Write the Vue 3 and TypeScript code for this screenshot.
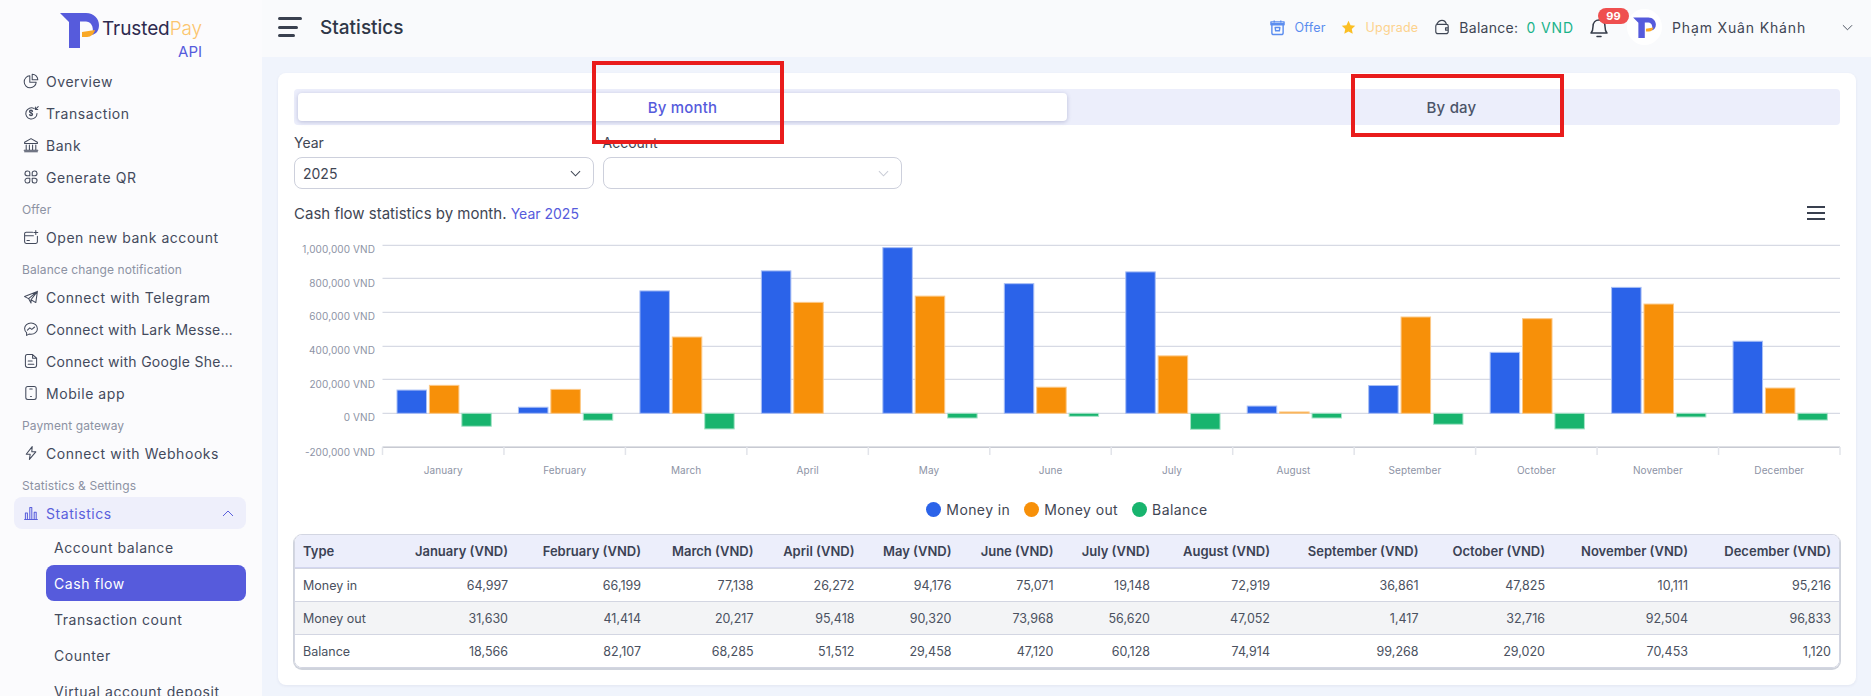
<script setup lang="ts">
interface NavRow { kind: 'item' | 'label' | 'open' | 'sub' | 'subactive'; text: string; icon?: string }

const nav: NavRow[] = [
  { kind: 'item', text: 'Overview', icon: 'M8.500 3.500a7.500 7.500 0 1 0 8 8h-8zM11.500 1.500a7 7 0 0 1 7 7h-7z' },
  { kind: 'item', text: 'Transaction', icon: 'M14 4.500a7 7 0 1 0 3.500 6M10 6.500v7M12 8a2 1.600 0 0 0-4 0c0 2.400 4 1.200 4 3.800a2 1.600 0 0 1-4 0M19 2l-3.500 3.500M15.500 2.500v3h3' },
  { kind: 'item', text: 'Bank', icon: 'M10 2l8 4.500v1.500H2V6.500zM4 10v6M8 10v6M12 10v6M16 10v6M2 18.500h16M1.500 16.500h17' },
  { kind: 'item', text: 'Generate QR', icon: 'M6 2.500a2.500 2.500 0 0 1 2.500 2.500v3.500H5a2.500 2.500 0 0 1 1-6zM14 2.500a2.500 2.500 0 0 0-2.500 2.500v3.500H15a2.500 2.500 0 0 0-1-6zM6 17.500a2.500 2.500 0 0 0 2.500-2.500v-3.500H5a2.500 2.500 0 0 0 1 6zM14 17.500a2.500 2.500 0 0 1-2.500-2.500v-3.500H15a2.500 2.500 0 0 1-1 6z' },
  { kind: 'label', text: 'Offer' },
  { kind: 'item', text: 'Open new bank account', icon: 'M12 4H4a2 2 0 0 0-2 2v10a2 2 0 0 0 2 2h12a2 2 0 0 0 2-2V9M2 8.500h11M5 14.500h3M16 2v5M13.500 4.500h5' },
  { kind: 'label', text: 'Balance change notification' },
  { kind: 'item', text: 'Connect with Telegram', icon: 'M18 3L2 9.500l5 2.500 11-9-8 10.500 0 4-3-5.500M18 3l-2 14-6-3.500' },
  { kind: 'item', text: 'Connect with Lark Messe…', icon: 'M10 2.500c-4.400 0-8 3.100-8 7 0 2 .9 3.800 2.500 5.100V18l3-1.600c.8.200 1.600.200 2.500.200 4.400 0 8-3.100 8-7s-3.600-7.100-8-7.100zM5.500 11.500l3-3 2.500 2 3.500-3' },
  { kind: 'item', text: 'Connect with Google She…', icon: 'M5 2h7l5 4.500V15a3 3 0 0 1-3 3H6a3 3 0 0 1-3-3V4.500A2.500 2.500 0 0 1 5 2zM12 2.500v4h4.500M6.500 10h5M6.500 14h7' },
  { kind: 'item', text: 'Mobile app', icon: 'M6 2h8a2.500 2.500 0 0 1 2.500 2.500v11A2.500 2.500 0 0 1 14 18H6a2.500 2.500 0 0 1-2.500-2.500v-11A2.500 2.500 0 0 1 6 2zM8.500 5h3M9.500 14.500h1' },
  { kind: 'label', text: 'Payment gateway' },
  { kind: 'item', text: 'Connect with Webhooks', icon: 'M11.500 2L4 11.500h5l-1 6.500L16 8.500h-5z' },
  { kind: 'label', text: 'Statistics & Settings' },
  { kind: 'open', text: 'Statistics', icon: 'M2 18h16M3 18v-8h2.500v8M8.500 18V3h2.500v15M14 18v-9h2.500v9' },
  { kind: 'sub', text: 'Account balance' },
  { kind: 'subactive', text: 'Cash flow' },
  { kind: 'sub', text: 'Transaction count' },
  { kind: 'sub', text: 'Counter' },
  { kind: 'sub', text: 'Virtual account deposit' }
]

const months = ['January', 'February', 'March', 'April', 'May', 'June', 'July', 'August', 'September', 'October', 'November', 'December']

// Values in thousands of VND
const moneyIn = [138, 36, 727, 846, 984, 770, 840, 43, 165, 362, 748, 428]
const moneyOut = [166, 142, 453, 659, 696, 155, 341, 8, 572, 562, 649, 150]
const balance = [-77, -41, -93, 0, -28, -18, -95, -28, -65, -93, -22, -40]

const plot = { left: 382.5, right: 1840, zero: 413.3, perStep: 33.67, barW: 29.5, barStep: 32.4, inset: 14.5 }
const ticks = [
  { label: '1,000,000 VND', y: 245.3, ly: 253.3 },
  { label: '800,000 VND', y: 278.3, ly: 287.3 },
  { label: '600,000 VND', y: 312.3, ly: 320.3 },
  { label: '400,000 VND', y: 346.3, ly: 354.3 },
  { label: '200,000 VND', y: 379.3, ly: 388.3 },
  { label: '0 VND', y: 413.3, ly: 421.3 },
  { label: '-200,000 VND', y: 447.3, ly: 455.7 }
]
const monthW = (plot.right - plot.left) / 12
const chartTop = 195
const yOf = (thousands: number) => plot.zero - (thousands / 200) * plot.perStep - chartTop
const xOf = (month: number, series: number) => plot.left + monthW * month + plot.inset + plot.barStep * series

const series = [
  { color: '#2b63e9', stroke: '#a9bff5', values: moneyIn },
  { color: '#f79009', stroke: '#fcc988', values: moneyOut },
  { color: '#18b46e', stroke: '#a7e3c8', values: balance }
]

const bars = series.flatMap((s, si) =>
  s.values
    .map((v, mi) => ({
      key: `${si}-${mi}`,
      x: xOf(mi, si),
      y: Math.min(yOf(v), yOf(0)),
      h: Math.abs(yOf(v) - yOf(0)),
      color: s.color,
      stroke: s.stroke
    }))
    .filter((b) => b.h > 0)
)

const legend = [
  { text: 'Money in', color: '#2b63e9' },
  { text: 'Money out', color: '#f79009' },
  { text: 'Balance', color: '#18b46e' }
]

const head = ['Type', ...months.map((m) => `${m} (VND)`)]
const rows = [
  ['Money in', '64,997', '66,199', '77,138', '26,272', '94,176', '75,071', '19,148', '72,919', '36,861', '47,825', '10,111', '95,216'],
  ['Money out', '31,630', '41,414', '20,217', '95,418', '90,320', '73,968', '56,620', '47,052', '1,417', '32,716', '92,504', '96,833'],
  ['Balance', '18,566', '82,107', '68,285', '51,512', '29,458', '47,120', '60,128', '74,914', '99,268', '29,020', '70,453', '1,120']
]
</script>

<template>
  <div class="shell">
    <aside class="side">
      <div class="brand">
        <svg class="mark" viewBox="0 0 39 36" width="39" height="36">
          <path d="M0 1H26C34 1 39 7 39 13C39 19 36 22 32 23C34 18 33 10 26 9.500H20V36H9V10Z" fill="#565bdc" />
          <path d="M22 20L35 18C34 22 31 25 27 25H22Z" fill="#f9a826" />
        </svg>
        <div class="brand-text">
          <div class="brand-name">Trusted<span>Pay</span></div>
          <div class="brand-api">API</div>
        </div>
      </div>
      <nav class="nav">
        <div v-for="row in nav" :key="row.text" :class="['row', row.kind, { cut: row.text.endsWith('…') }]">
          <svg v-if="row.icon" class="nav-icon" viewBox="0 0 20 20" width="16" height="16">
            <path :d="row.icon" fill="none" stroke="currentColor" stroke-width="1.300" stroke-linecap="round" stroke-linejoin="round" />
          </svg>
          <span>{{ row.text }}</span>
          <svg v-if="row.kind === 'open'" class="nav-chev" viewBox="0 0 12 7" width="12" height="7">
            <path d="M1 6l5-5 5 5" fill="none" stroke="currentColor" stroke-width="1" />
          </svg>
        </div>
      </nav>
    </aside>

    <div class="right">
      <header class="top">
        <div class="burger"><i></i><i></i><i></i></div>
        <h1>Statistics</h1>
        <div class="tools">
          <div class="tool offer">
            <svg viewBox="0 0 16 18" width="15" height="17">
              <path d="M2 5h12v9.500a2 2 0 0 1-2 2H4a2 2 0 0 1-2-2zM1 3h14v3H1zM4.500 1.500V4M11.500 1.500V4M5.500 9h5l-.5 3.500h-4z" fill="none" stroke="currentColor" stroke-width="1.500" stroke-linejoin="round" />
            </svg>
            <span>Offer</span>
          </div>
          <div class="tool upgrade">
            <svg viewBox="0 0 16 16" width="15" height="15">
              <path d="M8 .8l2.200 4.700 5 .6-3.700 3.500 1 5.100L8 12.200l-4.500 2.500 1-5.100L.8 6.100l5-.6z" fill="#fbbf24" />
            </svg>
            <span>Upgrade</span>
          </div>
          <div class="tool bal">
            <svg viewBox="0 0 18 18" width="16" height="16">
              <path d="M3 6c1-2 3-4.500 6-4.500S13.500 4 14 6M2 8a2 2 0 0 1 2-2h10a2 2 0 0 1 2 2v6a2.500 2.500 0 0 1-2.500 2.500h-9A2.500 2.500 0 0 1 2 14zM16 10h-3v2.500h3" fill="none" stroke="#3f4654" stroke-width="1.300" stroke-linejoin="round" />
            </svg>
            <span>Balance:</span>
            <b>0 VND</b>
          </div>
          <div class="bell">
            <svg viewBox="0 0 20 22" width="20" height="22">
              <path d="M2 17c1.500-1.500 2-3 2-6.500C4 6.500 6.500 4 10 4s6 2.500 6 6.500c0 3.500.5 5 2 6.500zM8 20.500h4" fill="none" stroke="#343b48" stroke-width="1.500" stroke-linecap="round" stroke-linejoin="round" />
            </svg>
            <em>99</em>
          </div>
          <div class="avatar">
            <svg viewBox="0 0 39 36" width="23" height="21">
              <path d="M0 1H26C34 1 39 7 39 13C39 19 36 22 32 23C34 18 33 10 26 9.500H20V36H9V10Z" fill="#565bdc" />
              <path d="M22 20L35 18C34 22 31 25 27 25H22Z" fill="#f9a826" />
            </svg>
          </div>
          <div class="name">Phạm Xuân Khánh</div>
          <svg class="name-chev" viewBox="0 0 12 7" width="11" height="7">
            <path d="M1 1l5 5 5-5" fill="none" stroke="#3f4654" stroke-width="1" />
          </svg>
        </div>
      </header>

      <main class="main">
        <section class="card">
          <div class="tabs">
            <div class="tab active">By month</div>
            <div class="tab">By day</div>
          </div>

          <div class="filters">
            <div class="field">
              <label>Year</label>
              <div class="select">
                <span>2025</span>
                <svg viewBox="0 0 12 7" width="11" height="7"><path d="M1 1l5 5 5-5" fill="none" stroke="#3f4654" stroke-width="1.100" /></svg>
              </div>
            </div>
            <div class="field">
              <label>Account</label>
              <div class="select">
                <span></span>
                <svg viewBox="0 0 12 7" width="11" height="7"><path d="M1 1l5 5 5-5" fill="none" stroke="#c9ccd6" stroke-width="1.100" /></svg>
              </div>
            </div>
          </div>

          <div class="title-row">
            <div class="title">Cash flow statistics by month. <span>Year 2025</span></div>
            <div class="menu"><i></i><i></i><i></i></div>
          </div>

          <svg class="chart" width="1546" height="290" viewBox="294 0 1546 290">
            <g v-for="t in ticks" :key="t.label">
              <line :x1="plot.left" :x2="plot.right" :y1="t.y - chartTop" :y2="t.y - chartTop" class="grid" />
              <text x="375" :y="t.ly - chartTop" text-anchor="end" class="tick">{{ t.label }}</text>
            </g>
            <line :x1="plot.left" :x2="plot.right" y1="252.300" y2="252.300" class="axis" />
            <line v-for="i in 13" :key="i" :x1="plot.left + monthW * (i - 1)" :x2="plot.left + monthW * (i - 1)" y1="252" y2="260" class="mtick" />
            <text v-for="(m, i) in months" :key="m" :x="plot.left + monthW * (i + 0.5)" y="279" text-anchor="middle" class="tick">{{ m }}</text>
            <rect v-for="b in bars" :key="b.key" :x="b.x" :y="b.y" :width="plot.barW" :height="b.h" :fill="b.color" :stroke="b.stroke" stroke-width="1" />
          </svg>

          <div class="legend">
            <div v-for="l in legend" :key="l.text" class="leg">
              <i :style="{ background: l.color }"></i>{{ l.text }}
            </div>
          </div>

          <div class="table">
            <div class="tr thead">
              <div v-for="h in head" :key="h" class="td">{{ h }}</div>
            </div>
            <div v-for="r in rows" :key="r[0]" class="tr">
              <div v-for="(c, i) in r" :key="i" class="td">{{ c }}</div>
            </div>
          </div>
        </section>
      </main>

      <div class="mark-box one"></div>
      <div class="mark-box two"></div>
    </div>
  </div>
</template>

<style>
html, body { margin: 0; height: 100%; overflow: hidden; background: #f0f4fc; }
</style>

<style scoped>
* { box-sizing: border-box; }
.shell {
  display: flex;
  width: 1871px;
  height: 696px;
  overflow: hidden;
  font-family: Inter, "Noto Sans", sans-serif;
  color: #3f4654;
}
.side { width: 262px; flex: none; background: #fbfbfd; height: 696px; overflow: hidden; }
.brand { height: 65px; display: flex; padding: 12px 0 0 60px; gap: 3px; }
.mark { flex: none; }
.brand-text { width: 100px; padding-top: 7px; }
.brand-name { font-size: 19px; line-height: 20px; color: #2e2a4f; letter-spacing: -.1px; white-space: nowrap; }
.brand-name span { color: #fbc56d; font-weight: 300; }
.brand-api { text-align: right; font-size: 15px; line-height: 20px; color: #565bdc; margin-top: 3px; }
.nav { padding: 0 16px 0 14px; }
.row { display: flex; align-items: center; white-space: nowrap; font-size: 14px; letter-spacing: .55px; color: #434a5c; }
.row.cut { letter-spacing: .28px; }
.item { height: 32px; padding-left: 9px; gap: 7px; }
.label { height: 28px; padding: 4px 0 0 8px; font-size: 12px; letter-spacing: .1px; color: #8c92a3; }
.nav-icon { flex: none; width: 16px; height: 16px; }
.open { height: 32px; padding: 0 12px 0 9px; gap: 7px; background: #eeeffb; border-radius: 8px; color: #5a5fdc; }
.nav-chev { margin-left: auto; }
.sub { height: 36px; margin-left: 32px; padding-left: 8px; }
.subactive { height: 36px; margin-left: 32px; padding-left: 8px; background: #565bdc; border-radius: 8px; color: #fff; }

.right { flex: 1; min-width: 0; position: relative; display: flex; flex-direction: column; }
.top { height: 57px; flex: none; background: #f9fafc; display: flex; align-items: center; padding: 0 0 3px 16px; }
.burger { width: 24px; height: 20px; display: flex; flex-direction: column; justify-content: space-between; }
.burger i { display: block; height: 3px; background: #39404f; border-radius: 2px; }
.burger i:first-child { width: 24px; }
.burger i:nth-child(2) { width: 20px; }
.burger i:nth-child(3) { width: 17px; }
h1 { margin: 0 0 0 18px; font-size: 19px; font-weight: 500; color: #2f3747; letter-spacing: 0; }
.tools { margin-left: auto; display: flex; align-items: center; padding-right: 18px; }
.tool { display: flex; align-items: center; font-size: 12.500px; letter-spacing: .2px; white-space: nowrap; }
.offer { color: #5b8def; gap: 10px; }
.upgrade { color: #fdd28d; gap: 10px; margin-left: 15px; }
.bal { font-size: 14px; letter-spacing: .3px; gap: 9px; margin-left: 16px; color: #3f4654; }
.bal b { font-weight: 400; color: #1ab38a; margin-left: -1px; letter-spacing: .9px; }
.bell { position: relative; width: 20px; height: 22px; margin-left: 15px; }
.bell em {
  position: absolute; left: 9px; top: -8px; width: 31px; height: 16px; border-radius: 8px;
  background: #ef4f4f; color: #fff; font-size: 11px; line-height: 16px; font-weight: 700; font-style: normal; text-align: center;
}
.avatar { width: 35px; height: 36px; border-radius: 50%; background: #fff; display: flex; align-items: center; justify-content: center; margin-left: 18px; position: relative; }
.name { font-size: 14px; margin-left: 10px; width: 170px; color: #3f4654; letter-spacing: .85px; white-space: nowrap; }
.name-chev { flex: none; }

.main { flex: 1; min-height: 0; background: #f0f4fc; padding: 16px 15px 0 16px; }
.card { background: #fff; border-radius: 8px; height: 612px; padding: 16px; box-shadow: 0 1px 3px rgba(60, 70, 110, .08); }
.tabs { display: flex; height: 36px; padding: 4px; background: #eceefb; border-radius: 4px; }
.tab { flex: 1; display: flex; align-items: center; justify-content: center; font-size: 15px; font-weight: 500; letter-spacing: .2px; color: #4b5468; }
.tab.active { background: #fff; color: #565bdc; border-radius: 4px; box-shadow: 0 1px 4px rgba(70, 75, 140, .3); }
.filters { display: flex; gap: 9px; margin-top: 8px; }
.field { width: 299.500px; }
.field label { display: block; font-size: 14px; line-height: 20px; margin-bottom: 4px; color: #3f4654; }
.select { height: 32px; border: 1px solid #cdd0dc; border-radius: 8px; display: flex; align-items: center; justify-content: space-between; padding: 0 12px 0 8px; font-size: 14px; color: #3f4654; }
.title-row { display: flex; align-items: center; justify-content: space-between; height: 24px; margin-top: 12px; }
.title { font-size: 15px; color: #3f4654; }
.title span { color: #565bdc; font-size: 14px; }
.menu { width: 18px; height: 14px; margin-right: 15px; display: flex; flex-direction: column; justify-content: space-between; }
.menu i { display: block; height: 2px; background: #39404f; }
.chart { display: block; margin-top: -30px; overflow: visible; }
.grid { stroke: #cdd1de; stroke-width: 1; }
.axis { stroke: #c8cad2; stroke-width: 1.500; }
.mtick { stroke: #e2e4ea; stroke-width: 1.500; }
.tick { font-size: 10px; letter-spacing: .1px; fill: #8d93a5; font-family: Inter, sans-serif; }
.legend { display: flex; justify-content: center; gap: 14px; height: 24px; margin-top: 12px; align-items: center; }
.leg { display: flex; align-items: center; gap: 5px; font-size: 14px; letter-spacing: .4px; color: #3f4654; }
.leg i { width: 15px; height: 15px; border-radius: 50%; }
.table { margin-top: 13px; border: 1px solid #d3d6e2; border-radius: 8px; overflow: hidden; box-shadow: 0 1px 0 1px #cfd3dc; width: 1546px; }
.tr { display: grid; grid-template-columns: 90px 131px 133px 112.500px 101px 97px 102px 96.500px 120px 148.500px 126.500px 143px 1fr; height: 33px; align-items: center; border-top: 1px solid #d3d6e2; font-size: 12.500px; color: #4a5160; background: #fff; }
.tr:nth-child(3) { background: #f3f4f6; }
.thead { background: #eceefb; border-top: 0; font-size: 13px; font-weight: 600; color: #3b4254; border-bottom: 1px solid #d3d6f0; }
.td { padding: 0 8px; text-align: right; white-space: nowrap; }
.td:first-child { text-align: left; }

.mark-box { position: absolute; border: 4px solid #e91c1c; pointer-events: none; }
.mark-box.one { left: 330px; top: 61px; width: 192px; height: 83px; }
.mark-box.two { left: 1089px; top: 74px; width: 213px; height: 63px; }
</style>
